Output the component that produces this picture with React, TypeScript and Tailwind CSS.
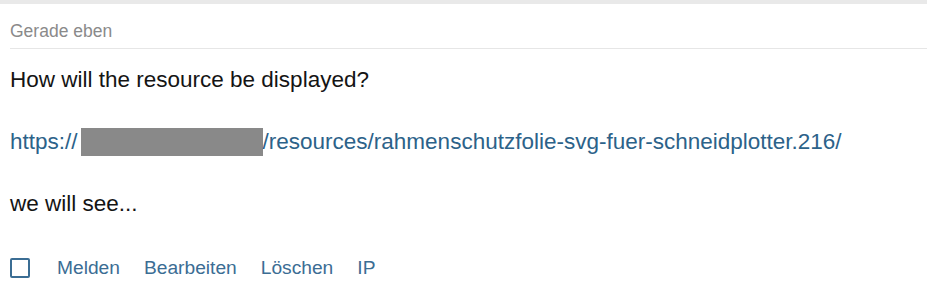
import React from "react";

export default function App() {
  return (
    <div className="w-[927px] h-[300px] bg-white overflow-hidden" style={{ fontFamily: '"Liberation Sans", Arial, sans-serif' }}>
      <div className="h-[4px] bg-[#e9e9e9]" />
      <div className="pl-[10px]">
        <div className="pt-[15px] pb-[5px] leading-[24px] text-[17.5px] text-[#8a8a8a] border-b border-[#e6e6e6]">
          Gerade eben
        </div>
        <div className="pt-[15px] text-[22.5px] leading-[31px] text-[#141414]">
          <div>How will the resource be displayed?</div>
          <div>&nbsp;</div>
          <div className="text-[#2c6289] flex items-center">
            <span>https://</span>
            <span className="inline-block w-[182px] h-[28px] bg-[#898989] ml-[3px]" />
            <span>/resources/rahmenschutzfolie-svg-fuer-schneidplotter.216/</span>
          </div>
          <div>&nbsp;</div>
          <div>we will see...</div>
        </div>
        <div className="mt-[37px] flex items-center text-[19.2px] leading-[24px] text-[#3b6d94]">
          <span className="w-[20px] h-[20px] border-2 border-[#3b6d94] rounded-[2px] mr-[27px]" />
          <span className="mr-[24px]">Melden</span>
          <span className="mr-[24px]">Bearbeiten</span>
          <span className="mr-[24px]">Löschen</span>
          <span>IP</span>
        </div>
      </div>
    </div>
  );
}
